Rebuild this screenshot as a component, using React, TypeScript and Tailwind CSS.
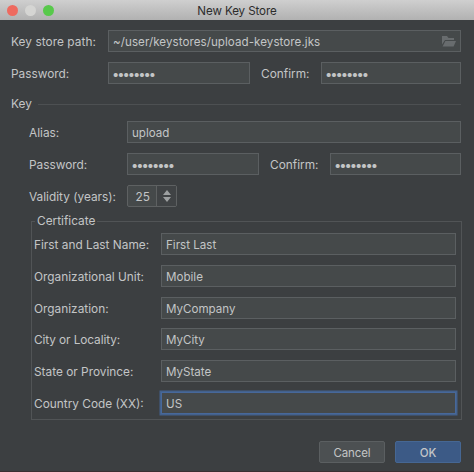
import type { ReactNode } from 'react';
import clsx from 'clsx';

const certificate = [
  { label: 'First and Last Name:', value: 'First Last', gap: 'mt-0' },
  { label: 'Organizational Unit:', value: 'Mobile', gap: 'mt-[10px]' },
  { label: 'Organization:', value: 'MyCompany', gap: 'mt-[10px]' },
  { label: 'City or Locality:', value: 'MyCity', gap: 'mt-[9px]', tracking: 'tracking-[-0.1px]' },
  { label: 'State or Province:', value: 'MyState', gap: 'mt-[10px]' },
  { label: 'Country Code (XX):', value: 'US', gap: 'mt-[10px]', focused: true },
];

const dots = '••••••••';

function Field({
  children,
  className,
  focused,
}: {
  children: ReactNode;
  className?: string;
  focused?: boolean;
}) {
  return (
    <div
      className={clsx(
        'flex h-[22px] items-center border bg-[#45494a] pt-[2px] pl-[4px] text-[11.6px]',
        focused ? 'border-[#47689a] ring-[1.5px] ring-[#43618c]' : 'border-[#5b5f61]',
        className,
      )}
    >
      {children}
    </div>
  );
}

function Label({ children, className }: { children: ReactNode; className?: string }) {
  return <span className={clsx('shrink-0 pt-[2px]', className)}>{children}</span>;
}

function Password() {
  return <span className="-ml-px text-[13px] tracking-[-2.05px]">{dots}</span>;
}

function TitleBar() {
  return (
    <header className="grid h-5 grid-cols-[1fr_auto_1fr] items-center bg-linear-to-b from-[#cfcfcf] to-[#b1b1b1] text-[#2c2c2c]">
      <div className="flex gap-[7px] pl-[7px]">
        <span className="size-[11px] rounded-full bg-[#ee6a5f]" />
        <span className="size-[11px] rounded-full bg-[#d5d5d3]" />
        <span className="size-[11px] rounded-full bg-[#58c94b]" />
      </div>
      <h1 className="pt-[2px] text-[11.6px] tracking-[-0.1px]">New Key Store</h1>
      <div />
    </header>
  );
}

export default function App() {
  return (
    <div className="h-[472px] w-[474px] overflow-hidden border-b border-[#3a2f31] bg-[#3c3f41] font-['Inter',sans-serif] text-[11.85px] leading-[16px] whitespace-nowrap text-[#c3c5c6]">
      <TitleBar />

      <main className="pt-[10px] pr-[13px]">
        <div className="flex items-center pl-[11px]">
          <Label className="w-[97px] tracking-[0.06px]">Key store path:</Label>
          <Field className="flex-1 justify-between pr-1">
            <span className="tracking-[0.06px]">~/user/keystores/upload-keystore.jks</span>
            <svg className="mb-[2px] h-[11px] w-[14px]" viewBox="0 0 14 11" fill="#686c6e">
              <path d="M0 0h5l1.500 2H12v2H3L0 8.500z" />
              <path d="M3.400 5H14l-2.400 5.500H.6z" />
            </svg>
          </Field>
        </div>

        <div className="mt-[10px] flex items-center pl-[11px]">
          <Label className="w-[97px]">Password:</Label>
          <Field className="w-[142px]">
            <Password />
          </Field>
          <Label className="ml-[11px] w-[60px]">Confirm:</Label>
          <Field className="flex-1">
            <Password />
          </Field>
        </div>

        <div className="mt-[12px] flex items-center gap-[6px] pl-[11px]">
          <h2>Key</h2>
          <hr className="flex-1 border-[#4d5052]" />
        </div>

        <div className="mt-[9px] flex items-center pl-[29px]">
          <Label className="w-[98px]">Alias:</Label>
          <Field className="flex-1">upload</Field>
        </div>

        <div className="mt-[10px] flex items-center pl-[29px]">
          <Label className="w-[98px]">Password:</Label>
          <Field className="w-[132px]">
            <Password />
          </Field>
          <Label className="ml-[11px] w-[60px]">Confirm:</Label>
          <Field className="flex-1">
            <Password />
          </Field>
        </div>

        <div className="mt-[10px] flex items-center pl-[29px]">
          <Label className="w-[98px]">Validity (years):</Label>
          <div className="flex h-[22px] w-[50px] rounded-[2px] border border-[#5e6162] bg-[#45494a]">
            <span className="flex w-[29px] items-center justify-end border-r border-[#5e6162] pt-[2px] pr-[6px]">
              25
            </span>
            <span className="flex flex-1 items-center justify-center bg-[#404345]">
              <svg className="h-[12px] w-[8px]" viewBox="0 0 8 12" fill="#9da0a1">
                <path d="M4 0l4 5H0zM4 12L0 7h8z" />
              </svg>
            </span>
          </div>
        </div>
      </main>

      <fieldset className="mt-[6px] mr-[12px] ml-[31px] h-[207px] border border-[#515456] pr-[5px] pl-[2px]">
        <legend className="ml-[1px] px-[2px] pt-[1px] leading-[15px]">Certificate</legend>
        <div className="pt-[4px]">
          {certificate.map(({ label, value, gap, tracking, focused }) => (
            <div key={label} className={clsx('flex items-center', gap)}>
              <Label className={clsx('w-[127px]', tracking)}>{label}</Label>
              <Field className="flex-1" focused={focused}>
                {value}
              </Field>
            </div>
          ))}
        </div>
      </fieldset>

      <footer className="mt-[21px] flex justify-end gap-[10px] pr-[13px] text-[11.5px]">
        <button className="h-[22px] w-[66px] rounded-[2px] border border-[#5b5f61] bg-[#4c5052] pt-px leading-[20px] tracking-[-0.1px]">
          Cancel
        </button>
        <button className="h-[22px] w-[66px] rounded-[2px] border border-[#466793] bg-[#3c5a86] pt-px leading-[20px] font-medium">
          OK
        </button>
      </footer>
    </div>
  );
}
